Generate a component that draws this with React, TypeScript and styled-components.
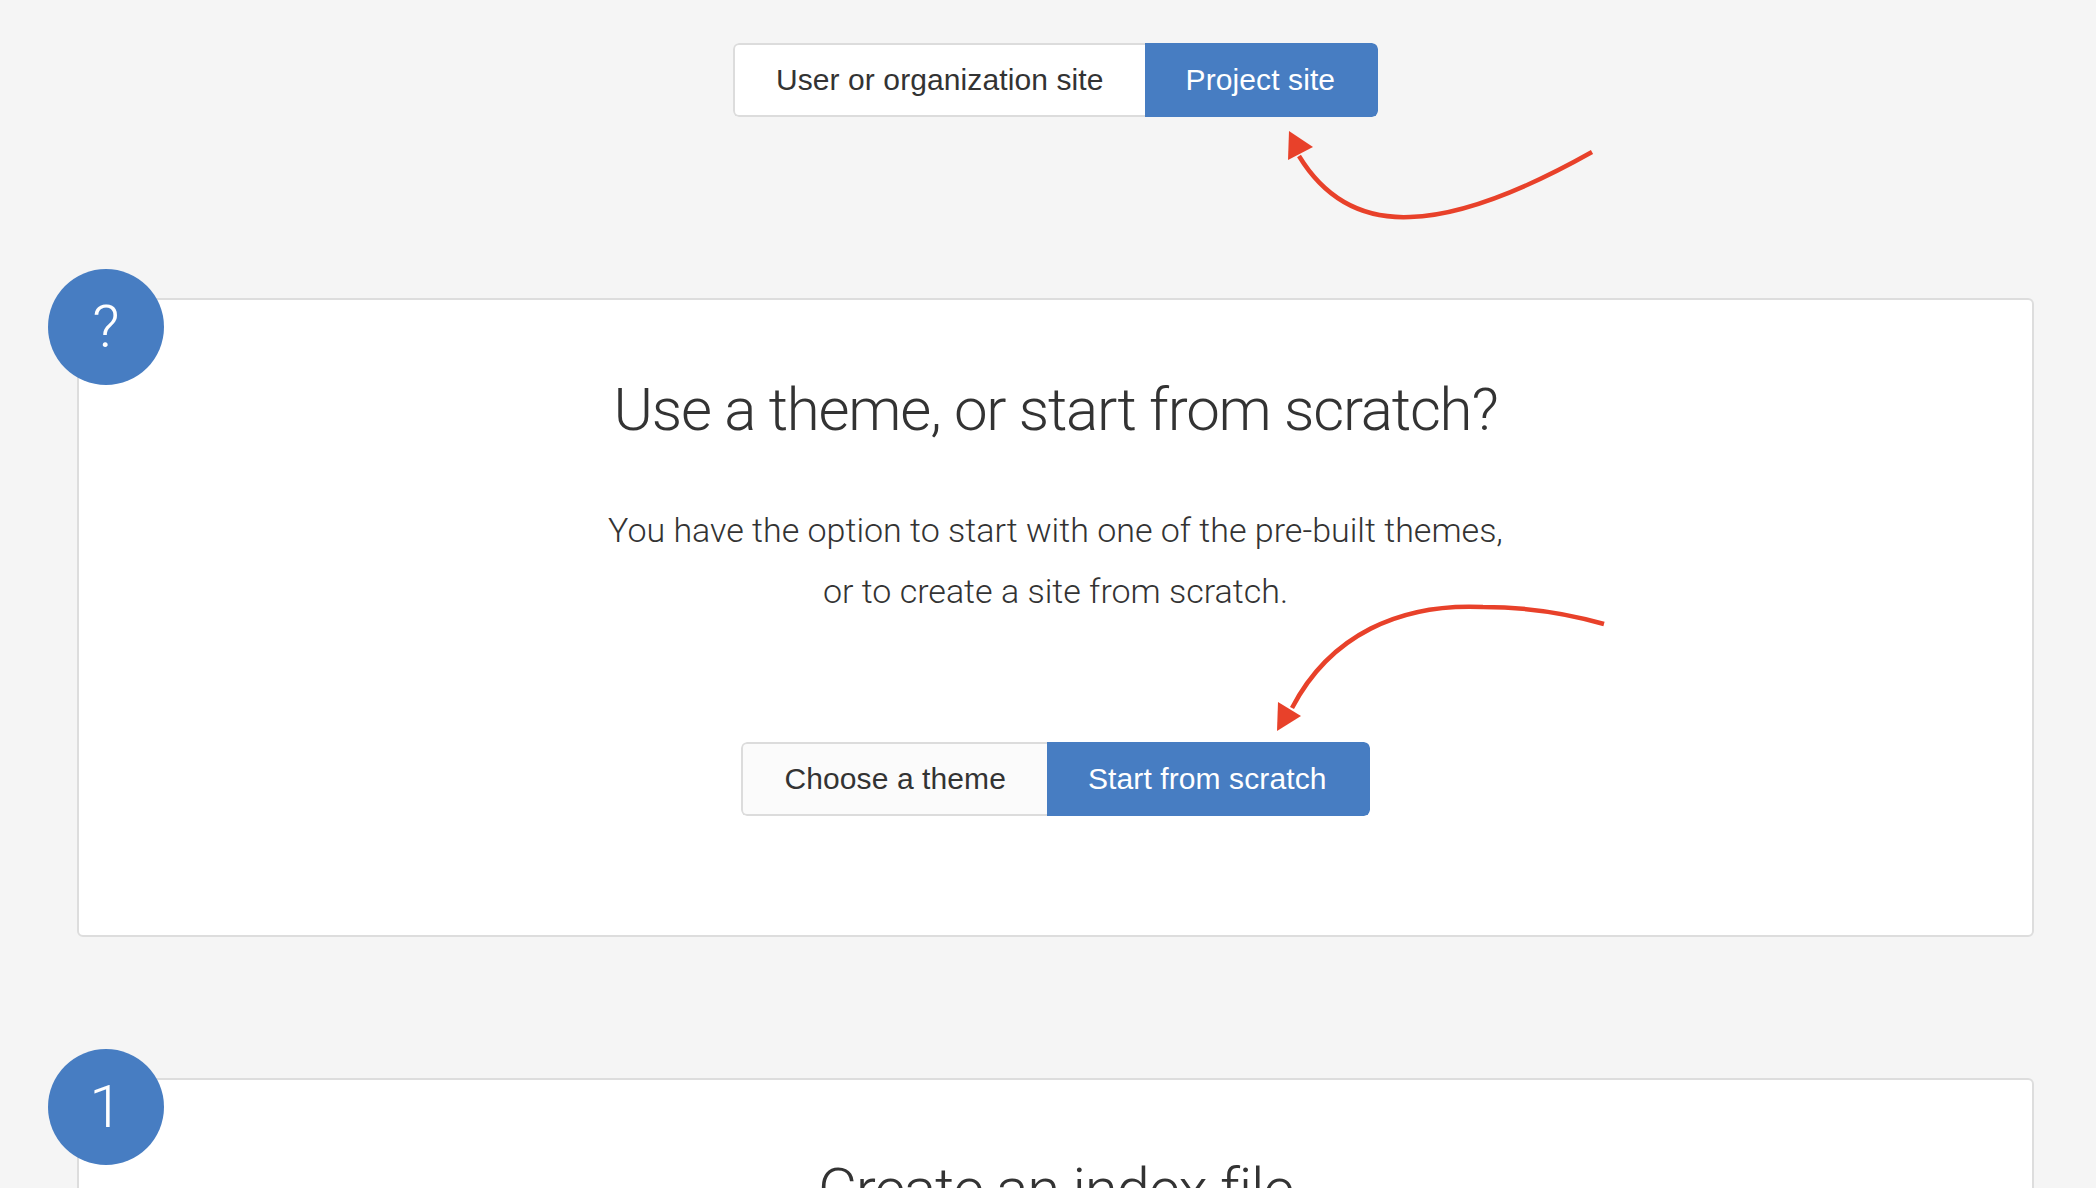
import styled, { createGlobalStyle } from "styled-components";

const GlobalStyle = createGlobalStyle`
  html, body {
    margin: 0;
    padding: 0;
    background: #f5f5f5;
    overflow: hidden;
  }

  body {
    font-family: "Liberation Sans", Arial, sans-serif;
    color: #333;
  }
`;

export default function App() {
  return (
    <>
      <GlobalStyle />
      <Page>
        <SwitchRow>
          <Segmented>
            <Segment type="button">User or organization site</Segment>
            <Segment type="button" $active>
              Project site
            </Segment>
          </Segmented>
        </SwitchRow>

        <StepCard $first>
          <StepBadge>?</StepBadge>
          <StepTitle>Use a theme, or start from scratch?</StepTitle>
          <StepText>
            You have the option to start with one of the pre-built themes,
            <br />
            or to create a site from scratch.
          </StepText>
          <Actions>
            <Segmented>
              <Segment type="button" $muted>
                Choose a theme
              </Segment>
              <Segment type="button" $active>
                Start from scratch
              </Segment>
            </Segmented>
          </Actions>
        </StepCard>

        <StepCard>
          <StepBadge>1</StepBadge>
          <StepTitle>Create an index file</StepTitle>
          <StepText>
            Head over to GitHub and create a new public repository named
            <br />
            username.github.io, where username is your username.
          </StepText>
        </StepCard>

        <Annotations viewBox="0 0 2096 1188" width="2096" height="1188">
          <path d="M1592 152 Q1480 215 1410 217 Q1338 220 1299 156" />
          <polygon points="1289,131 1288,160 1313,147" />
          <path d="M1604 624 Q1545 607 1483 607 C1400 603 1330 635 1292 708" />
          <polygon points="1277,731 1278,702 1301,716" />
        </Annotations>
      </Page>
    </>
  );
}

const Page = styled.div`
  position: relative;
  height: 1188px;
  overflow: hidden;
  box-sizing: border-box;
  padding: 43px 62px 0 77px;
`;

const SwitchRow = styled.div`
  display: flex;
  justify-content: center;
`;

const Segmented = styled.div`
  display: inline-flex;
  border-radius: 6px;
  overflow: hidden;
`;

const Segment = styled.button<{ $active?: boolean; $muted?: boolean }>`
  box-sizing: border-box;
  height: 74px;
  padding: 0 41px;
  margin: 0;
  font-family: "Liberation Sans", Arial, sans-serif;
  font-size: 30px;
  letter-spacing: 0.1px;
  color: ${(p) => (p.$active ? "#fff" : "#333")};
  background: ${(p) => (p.$active ? "#477dc2" : p.$muted ? "#fbfbfb" : "#fff")};
  border: 2px solid ${(p) => (p.$active ? "#477dc2" : "#dcdcdc")};
  cursor: pointer;

  &:first-child {
    border-radius: 6px 0 0 6px;
    border-right: 0;
  }

  &:last-child {
    border-radius: 0 6px 6px 0;
  }

  & + & {
    border-left: 0;
  }
`;

const StepCard = styled.section<{ $first?: boolean }>`
  position: relative;
  margin-top: ${(p) => (p.$first ? "181px" : "141px")};
  background: #fff;
  border: 2px solid #dddddd;
  border-radius: 6px;
  padding: 75px 40px 119px;
  display: flex;
  flex-direction: column;
  align-items: center;
  text-align: center;
`;

const StepBadge = styled.div`
  position: absolute;
  top: -31px;
  left: -31px;
  width: 116px;
  height: 116px;
  border-radius: 50%;
  background: #477dc2;
  color: #fff;
  display: flex;
  align-items: center;
  justify-content: center;
  font-family: Roboto, "Liberation Sans", sans-serif;
  font-weight: 300;
  font-size: 60px;
  line-height: 1;
`;

const StepTitle = styled.h2`
  margin: 0;
  font-family: Roboto, "Liberation Sans", sans-serif;
  font-weight: 300;
  font-size: 60px;
  letter-spacing: -1.2px;
  line-height: 70px;
  color: #333;
`;

const StepText = styled.p`
  margin: 55px 0 0;
  font-family: Roboto, "Liberation Sans", sans-serif;
  font-weight: 300;
  font-size: 34px;
  line-height: 61px;
  color: #333;
`;

const Actions = styled.div`
  margin-top: 120px;
  display: flex;
  justify-content: center;
`;

const Annotations = styled.svg`
  position: absolute;
  top: 0;
  left: 0;
  pointer-events: none;

  path {
    fill: none;
    stroke: #e8412a;
    stroke-width: 4.5;
  }

  polygon {
    fill: #e8412a;
  }
`;
